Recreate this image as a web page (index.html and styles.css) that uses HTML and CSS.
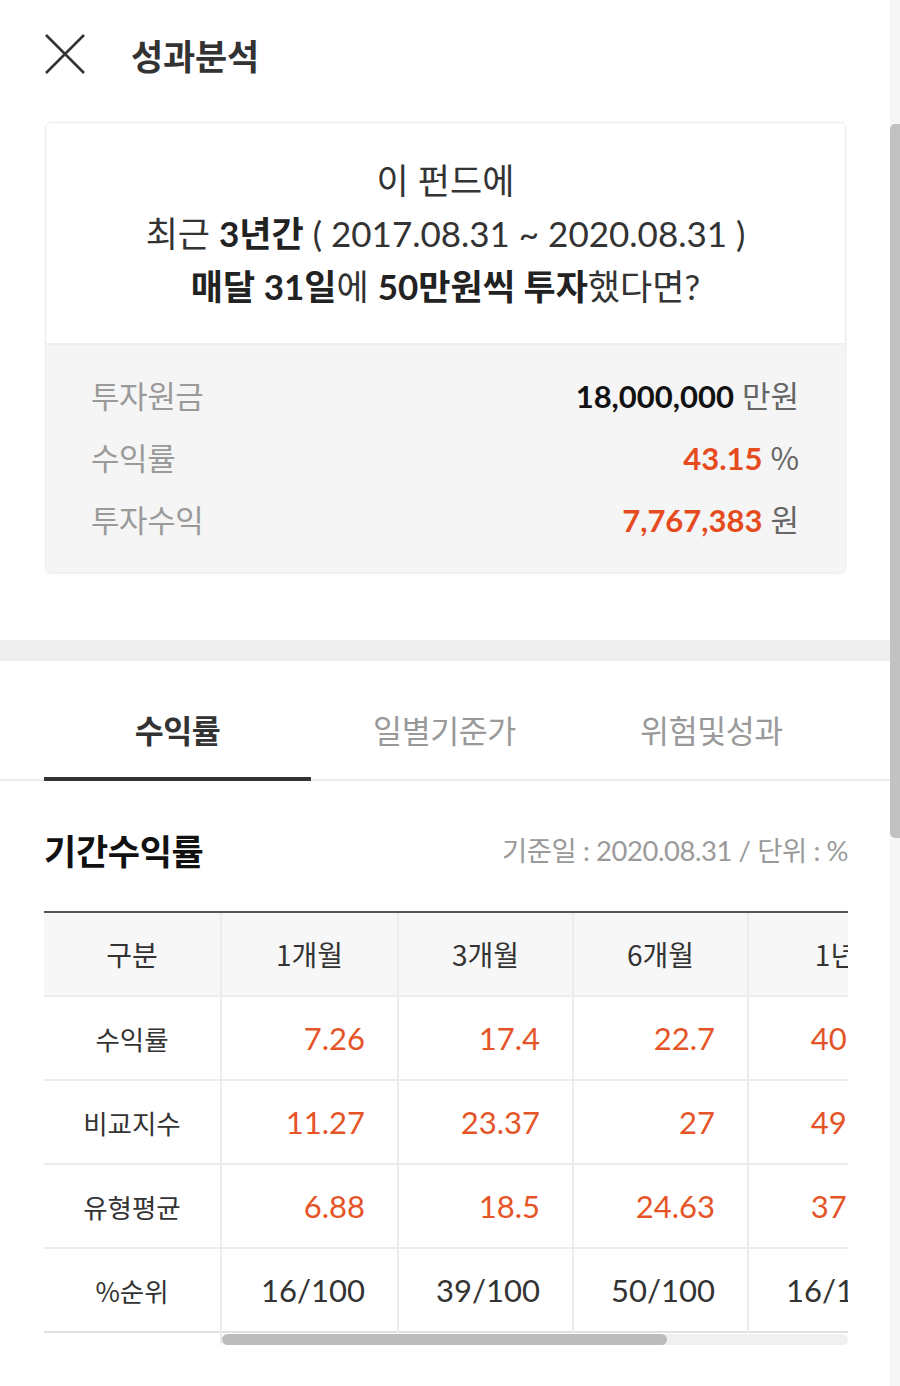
FILE: index.html
```html
<!DOCTYPE html>
<html lang="ko">
<head>
<meta charset="utf-8">
<link rel="stylesheet" href="styles.css">
</head>
<body>
<div class="screen">
  <main class="page">
    <header class="topbar">
      <svg class="close" viewBox="0 0 40 40" width="40" height="40"><path d="M1 1 L39 39 M39 1 L1 39" stroke="#333" stroke-width="2.6" fill="none"/></svg>
      <h1 class="title">성과분석</h1>
    </header>

    <section class="card">
      <div class="card-head">
        <p>이 펀드에</p>
        <p>최근 <b>3년간</b> ( 2017.08.31 ~ 2020.08.31 )</p>
        <p><b>매달 31일</b>에 <b>50만원씩 투자</b>했다면?</p>
      </div>
      <div class="card-body">
        <div class="row"><span class="lbl">투자원금</span><span class="val"><b class="black">18,000,000</b> <span class="unit">만원</span></span></div>
        <div class="row"><span class="lbl">수익률</span><span class="val"><b class="red">43.15</b> <span class="unit">%</span></span></div>
        <div class="row"><span class="lbl">투자수익</span><span class="val"><b class="red">7,767,383</b> <span class="unit">원</span></span></div>
      </div>
    </section>

    <div class="divider"></div>

    <nav class="tabs">
      <div class="tab active">수익률</div>
      <div class="tab">일별기준가</div>
      <div class="tab">위험및성과</div>
    </nav>

    <section class="period">
      <div class="period-head">
        <h2>기간수익률</h2>
        <span class="meta">기준일 : 2020.08.31 / 단위 : %</span>
      </div>

      <div class="table">
        <div class="fixed-col">
          <div class="cell head">구분</div>
          <div class="cell">수익률</div>
          <div class="cell">비교지수</div>
          <div class="cell">유형평균</div>
          <div class="cell">%순위</div>
        </div>
        <div class="scroll-area">
          <div class="cols">
            <div class="col">
              <div class="cell head">1개월</div>
              <div class="cell num red">7.26</div>
              <div class="cell num red">11.27</div>
              <div class="cell num red">6.88</div>
              <div class="cell num">16/100</div>
            </div>
            <div class="col">
              <div class="cell head">3개월</div>
              <div class="cell num red">17.4</div>
              <div class="cell num red">23.37</div>
              <div class="cell num red">18.5</div>
              <div class="cell num">39/100</div>
            </div>
            <div class="col">
              <div class="cell head">6개월</div>
              <div class="cell num red">22.7</div>
              <div class="cell num red">27</div>
              <div class="cell num red">24.63</div>
              <div class="cell num">50/100</div>
            </div>
            <div class="col">
              <div class="cell head">1년</div>
              <div class="cell num red">40.52</div>
              <div class="cell num red">49.18</div>
              <div class="cell num red">37.25</div>
              <div class="cell num">16/100</div>
            </div>
          </div>
          <div class="hscroll"><div class="hthumb"></div></div>
        </div>
      </div>
    </section>
  </main>
  <aside class="vscroll"><div class="vthumb"></div></aside>
</div>
</body>
</html>
```

FILE: styles.css
```css
* { box-sizing: border-box; }
html, body { margin: 0; padding: 0; background: #fff; }
body {
  font-family: Lato, "Noto Sans CJK KR", sans-serif;
  color: #333;
  width: 900px;
  height: 1386px;
  overflow: hidden;
}
.screen { display: flex; width: 900px; height: 1386px; }
.page { width: 890px; flex: none; }
.vscroll { width: 10px; background: #f6f6f6; flex: none; }
.vthumb { margin-top: 124px; height: 714px; background: #c2c2c2; border-radius: 5px 0 0 5px; }

.topbar { display: flex; align-items: center; height: 108px; padding-left: 45px; }
.close { flex: none; }
.title { margin: 0 0 0 46px; font-size: 35px; font-weight: 700; color: #333; letter-spacing: -0.2px; font-family: "Noto Sans CJK KR", sans-serif; }

.card {
  margin: 14px 44px 0 45px;
  border: 1px solid #ececec;
  border-radius: 6px;
  box-shadow: 0 1px 3px rgba(0,0,0,0.06);
  overflow: hidden;
}
.card-head { background: #fff; text-align: center; padding: 31px 0 30px; border-bottom: 2px solid #efefef; }
.card-head p { margin: 0; font-size: 35px; line-height: 53px; color: #333; letter-spacing: 0; }
.card-head b { font-weight: 700; color: #222; }
.card-body { background: #f5f5f5; padding: 18px 46px 23px 45px; }
.row { display: flex; justify-content: space-between; align-items: center; height: 62px; }
.lbl { font-size: 31px; color: #9a9a9a; font-family: "Noto Sans CJK KR", sans-serif; letter-spacing: -0.4px; }
.val { font-size: 31px; }
.val b { font-weight: 700; }
.black { color: #111; }
.red { color: #e64b1e; }
.unit { color: #666; font-family: "Noto Sans CJK KR", sans-serif; font-weight: 400; }

.divider { height: 21px; background: #efefef; margin-top: 67px; }

.tabs { display: flex; padding: 0 45px 0 44px; height: 120px; border-bottom: 2px solid #ececec; }
.tab { flex: 1; display: flex; align-items: center; justify-content: center; font-size: 31.5px; color: #999; padding-top: 20px; border-bottom: 4px solid transparent; margin-bottom: -2px; font-family: "Noto Sans CJK KR", sans-serif; letter-spacing: -0.4px; }
.tab.active { color: #333; font-weight: 700; border-bottom-color: #333; }

.period { padding: 0 42px 0 44px; }
.period-head { display: flex; justify-content: space-between; align-items: center; height: 130px; padding-top: 6px; }
.period-head h2 { margin: 0; font-size: 35px; font-weight: 700; color: #111; font-family: "Noto Sans CJK KR", sans-serif; letter-spacing: -0.3px; }
.meta { font-size: 27.4px; color: #9a9a9a; letter-spacing: -0.4px; }

.table { display: flex; border-top: 2px solid #555; }
.fixed-col { width: 178px; flex: none; border-right: 2px solid #ececec; }
.scroll-area { flex: 1; overflow: hidden; }
.cols { display: flex; width: 720px; }
.col { width: 175px; flex: none; border-right: 2px solid #ececec; }
.col:first-child { width: 177px; }
.cell { height: 84px; display: flex; align-items: center; justify-content: center; border-bottom: 2px solid #ececec; font-size: 26.5px; color: #333; font-family: "Noto Sans CJK KR", sans-serif; }
.cell.head { background: #f7f7f7; font-size: 28px; }
.fixed-col .cell:last-child, .col .cell:last-child { border-bottom-color: #e0e0e0; }
.cell.num { justify-content: flex-end; padding-right: 32px; font-family: Lato, sans-serif; font-size: 31px; }
.cell.num.red { color: #e55427; }
.hscroll { height: 11px; background: #f0f0f0; border-radius: 6px; margin-top: 1px; }
.hthumb { width: 445px; height: 11px; background: #bcbcbc; border-radius: 6px; }
```
